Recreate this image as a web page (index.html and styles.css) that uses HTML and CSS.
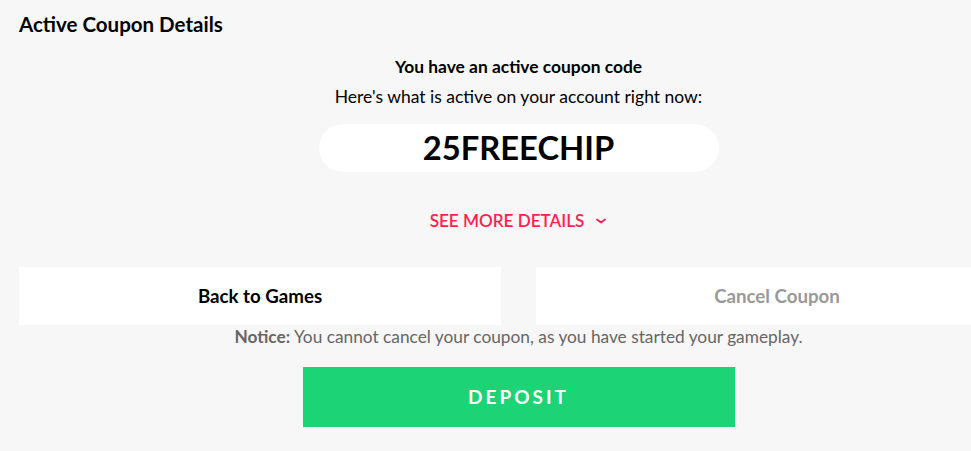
FILE: index.html
```html
<!DOCTYPE html>
<html>
<head>
<meta charset="utf-8">
<link rel="stylesheet" href="styles.css">
</head>
<body>
<div class="page">
  <h1 class="title">Active Coupon Details</h1>
  <div class="content">
    <p class="lead">You have an active coupon code</p>
    <p class="sub">Here's what is active on your account right now:</p>
    <div class="code">25FREECHIP</div>
    <div class="more">SEE MORE DETAILS
      <svg class="chev" width="12" height="8" viewBox="0 0 12 8"><path d="M2 2.5 L6 5.5 L10 2.5" fill="none" stroke="#ff1f4f" stroke-width="1.8" stroke-linecap="round" stroke-linejoin="round"/></svg>
    </div>
    <div class="buttons">
      <div class="btn">Back to Games</div>
      <div class="btn disabled">Cancel Coupon</div>
    </div>
    <p class="notice"><b>Notice:</b> You cannot cancel your coupon, as you have started your gameplay.</p>
    <div class="deposit">DEPOSIT</div>
  </div>
</div>
</body>
</html>
```
FILE: styles.css
```css
html, body {
  margin: 0;
  padding: 0;
  background: #f7f7f7;
  overflow: hidden;
}
body {
  font-family: Lato, "Open Sans", sans-serif;
  color: #000;
}
.page {
  width: 999px;
  padding: 12px 0 0 19px;
}
.title {
  margin: 0;
  font-size: 20.5px;
  font-weight: 700;
  line-height: 25px;
}
.content {
  display: flex;
  flex-direction: column;
  align-items: center;
}
.lead {
  margin: 18px 0 0;
  font-size: 17.4px;
  font-weight: 700;
  line-height: 24px;
}
.sub {
  margin: 6px 0 0;
  font-size: 17.5px;
  line-height: 24px;
}
.code {
  margin-top: 15px;
  width: 400px;
  height: 48px;
  border-radius: 24px;
  background: #fff;
  font-size: 32.7px;
  font-weight: 700;
  line-height: 48px;
  text-align: center;
}
.more {
  margin-top: 37px;
  color: #ff1f4f;
  font-size: 17.1px;
  font-weight: 600;
  line-height: 24px;
  display: flex;
  align-items: center;
  gap: 11px;
}
.chev {
  display: block;
}
.buttons {
  margin-top: 34px;
  width: 100%;
  display: flex;
  gap: 35px;
}
.btn {
  flex: 1;
  height: 58px;
  background: #fff;
  font-size: 18.7px;
  font-weight: 700;
  line-height: 58px;
  text-align: center;
}
.btn.disabled {
  color: #999;
}
.notice {
  margin: 0;
  color: #666;
  font-size: 17.3px;
  line-height: 24px;
}
.deposit {
  margin-top: 18px;
  width: 432px;
  height: 60px;
  background: #1cd475;
  color: #fff;
  font-size: 19px;
  font-weight: 700;
  letter-spacing: 3px;
  line-height: 60px;
  text-align: center;
}
```
